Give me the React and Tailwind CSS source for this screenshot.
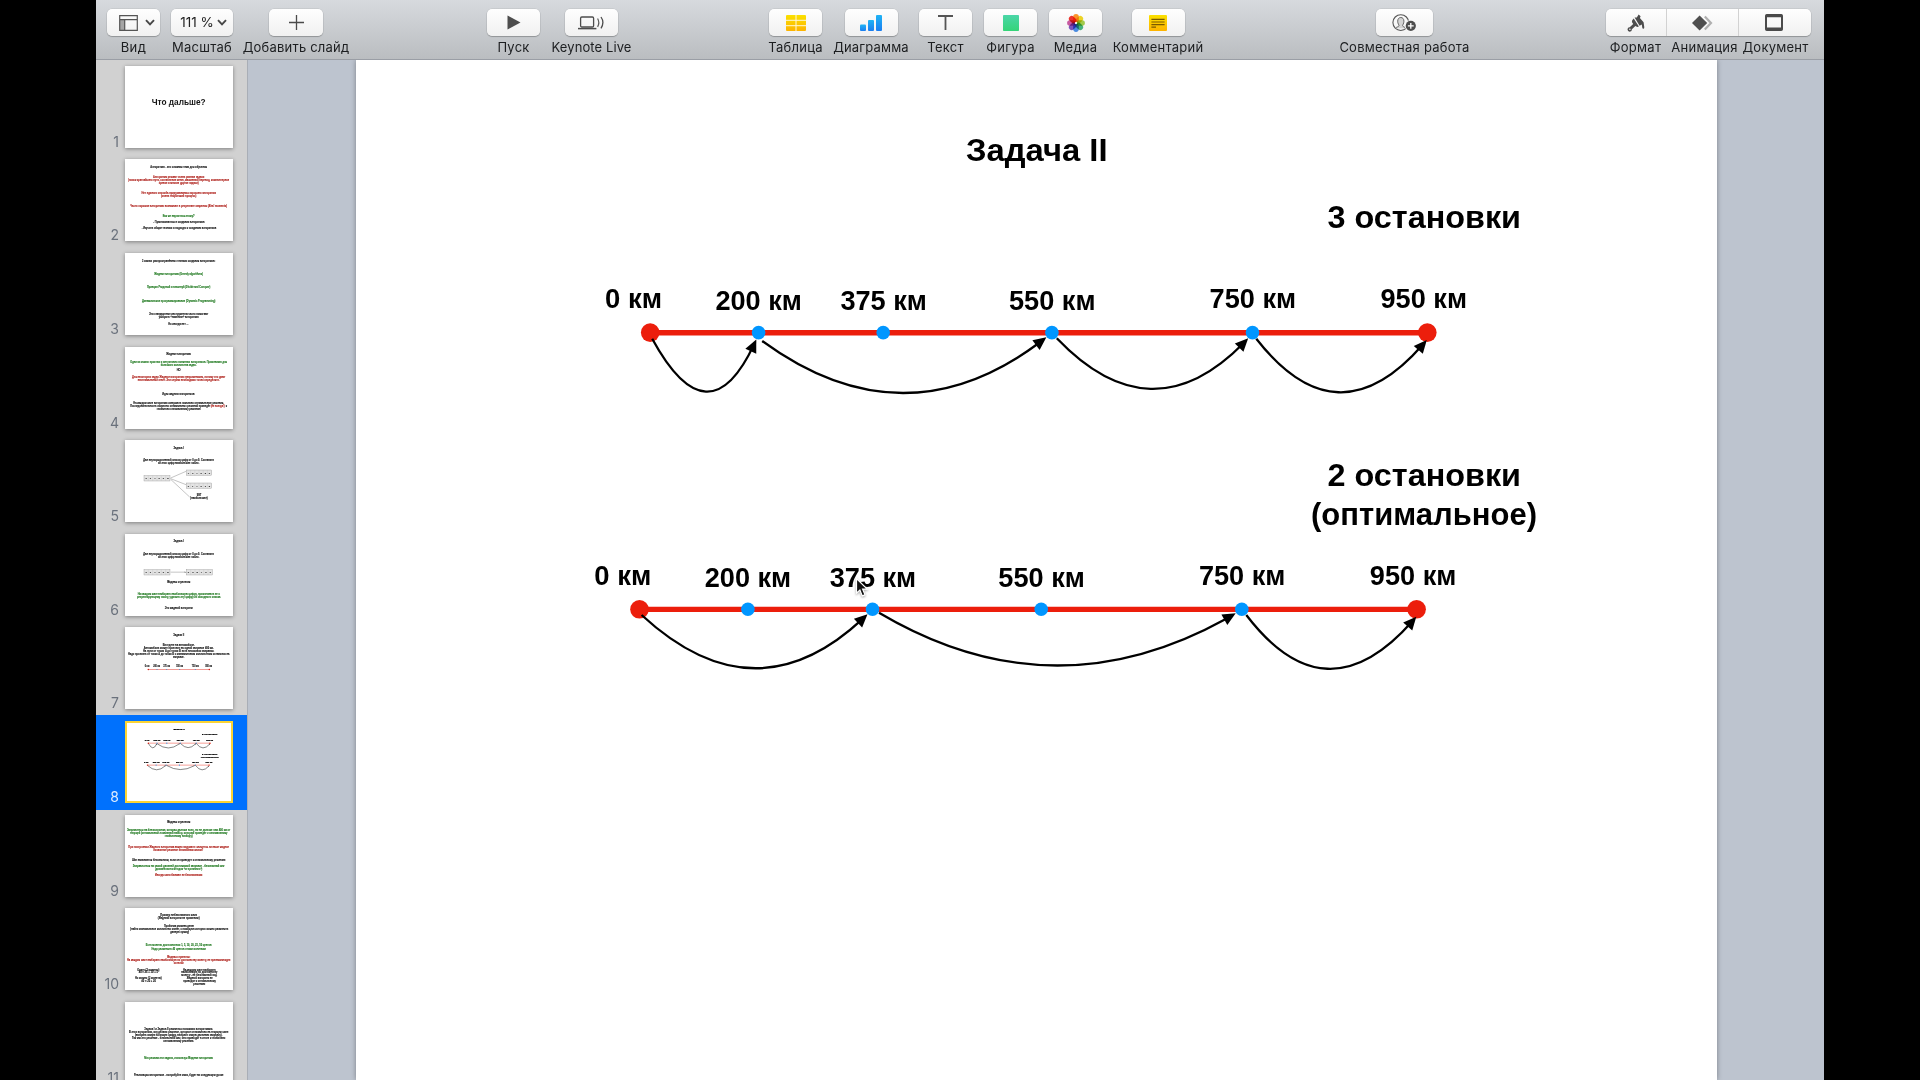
import React from "react";

const K = "#151515";
const R = "#b0241e";
const G = "#217a21";

/* ---------- Toolbar icons ---------- */

const Chevron = () => (
  <svg width="10" height="7" viewBox="0 0 10 7" fill="none" className="shrink-0">
    <path d="M1 1.2 5 5.4 9 1.2" stroke="#474747" strokeWidth="1.9" />
  </svg>
);

const ViewIcon = () => (
  <svg width="19" height="16" viewBox="0 0 19 16" fill="none" className="shrink-0">
    <rect x="0.7" y="4.7" width="5" height="10.6" fill="#a5a5a5" />
    <path d="M0.7 0.7h17.6v14.6H0.7zM0.7 4.7h17.6M5.7 4.7v10.6" stroke="#555" strokeWidth="1.2" />
  </svg>
);

const PlusIcon = () => (
  <svg width="15" height="15" viewBox="0 0 15 15">
    <path d="M7.5 0v15M0 7.5h15" stroke="#4a4a4a" strokeWidth="1.3" />
  </svg>
);

const PlayIcon = () => (
  <svg width="14" height="15" viewBox="0 0 14 15">
    <path d="M0.5 0.4 13.5 7.5 0.5 14.6z" fill="#4d4d4d" />
  </svg>
);

const LiveIcon = () => (
  <svg width="27" height="14" viewBox="0 0 27 14" fill="none">
    <rect x="2.6" y="1" width="13" height="10" rx="1.2" stroke="#4d4d4d" strokeWidth="1.3" />
    <path d="M0 12.6h18.4" stroke="#4d4d4d" strokeWidth="1.5" />
    <path d="M19.6 2.5q2.4 4 0 8.4" stroke="#5a5a5a" strokeWidth="1.2" />
    <path d="M23 1q3.8 5.4 0 11.4" stroke="#4d4d4d" strokeWidth="1.3" />
  </svg>
);

const TableIcon = () => (
  <svg width="20" height="16" viewBox="0 0 20 16">
    <defs>
      <linearGradient id="tableFill" x1="0" y1="0" x2="0" y2="1">
        <stop offset="0" stopColor="#fbe100" />
        <stop offset="1" stopColor="#fdb300" />
      </linearGradient>
    </defs>
    <rect width="20" height="16" rx="1" fill="url(#tableFill)" />
    <path d="M10 0v16M0 5.3h20M0 10.7h20" stroke="#fff8d8" strokeWidth="1" />
  </svg>
);

const ChartIcon = () => (
  <svg width="22" height="16" viewBox="0 0 22 16">
    <defs>
      <linearGradient id="barFill" x1="0" y1="0" x2="0" y2="1">
        <stop offset="0" stopColor="#1fb4f5" />
        <stop offset="1" stopColor="#1a7df0" />
      </linearGradient>
    </defs>
    <rect x="0" y="9.6" width="6" height="6.4" rx="1" fill="url(#barFill)" />
    <rect x="8" y="5" width="6" height="11" rx="1" fill="url(#barFill)" />
    <rect x="16" y="0" width="6" height="16" rx="1" fill="url(#barFill)" />
  </svg>
);

const TextIcon = () => (
  <svg width="15" height="15" viewBox="0 0 15 15">
    <path d="M0 1h15M7.5 1v14" stroke="#555" strokeWidth="1.8" />
  </svg>
);

const ShapeIcon = () => (
  <svg width="16" height="16" viewBox="0 0 16 16">
    <defs>
      <linearGradient id="shapeFill" x1="0" y1="0" x2="0" y2="1">
        <stop offset="0" stopColor="#4bd6a8" />
        <stop offset="1" stopColor="#35d478" />
      </linearGradient>
    </defs>
    <rect width="16" height="16" rx="0.8" fill="url(#shapeFill)" />
  </svg>
);

const PETALS = ["#ff8a12", "#f0d410", "#9ccb3a", "#35b075", "#3a86ea", "#7345bd", "#c94a9c", "#ee2018"];
const MediaIcon = () => (
  <svg width="18" height="18" viewBox="-9 -9 18 18">
    {PETALS.map((c, i) => (
      <rect
        key={c}
        x="-2.8"
        y="-8.9"
        width="5.6"
        height="8.2"
        rx="2.8"
        fill={c}
        fillOpacity="0.9"
        className="mix-blend-multiply"
        transform={`rotate(${i * 45})`}
      />
    ))}
    <circle r="1" fill="#fff" />
  </svg>
);

const CommentIcon = () => (
  <svg width="18" height="16" viewBox="0 0 18 16">
    <rect width="18" height="16" rx="1" fill="url(#tableFill)" />
    <path d="M2.4 4.4h13.2M2.4 7h13.2M2.4 9.6h13.2M2.4 12.1h4.6" stroke="#7a5a00" strokeWidth="1.1" />
  </svg>
);

const CollabIcon = () => (
  <svg width="25" height="18" viewBox="0 0 25 18" fill="none">
    <circle cx="8.8" cy="8.6" r="7.9" stroke="#555" strokeWidth="1.1" />
    <path
      d="M3.6 14.2c.6-1.2 3.4-1.4 3.4-2.6 0-.9-1.3-1.8-1.3-4.4 0-2.3 1.2-3.7 3.1-3.7s3.1 1.4 3.1 3.7c0 2.6-1.3 3.5-1.3 4.4 0 1.2 2 1.2 3 2.6"
      fill="#d4d4d4"
      stroke="#666"
      strokeWidth="1"
    />
    <circle cx="18.8" cy="11.8" r="5.9" fill="#f8f8f8" />
    <circle cx="18.8" cy="11.8" r="5.1" fill="#4d4d4d" />
    <path d="M18.8 8.9v5.8M15.9 11.8h5.8" stroke="#fff" strokeWidth="1.3" />
  </svg>
);

const FormatIcon = () => (
  <svg width="18" height="18" viewBox="0 0 18 18">
    <path d="M7.6 3.6 9.8 3.4 11.6.6 13.6 2.2 12.9 3.9 16.6 8.2 17.3 13.2Q17.2 14.8 16.2 14.7 15.1 14.5 15.2 13L14.8 10.6 12.6 11.7z" fill="#4d4d4d" />
    <path d="M6.7 4.5 11.9 12.4 10.3 13 8.4 11.9 4.9 15.3A2.2 2.2 0 1 1 2.7 13.3L6.2 10 4.9 8 5.2 6.2z" fill="#4d4d4d" />
    <circle cx="2.9" cy="15.3" r="0.8" fill="#f5f5f5" />
  </svg>
);

const AnimateIcon = () => (
  <svg width="21" height="16" viewBox="0 0 21 16">
    <path d="M12.8 1.6 19 8l-6.2 6.4" fill="none" stroke="#b0b0b0" strokeWidth="2.2" />
    <path d="M7.6.4 15.2 8l-7.6 7.6L0 8z" fill="#4f4f4f" />
  </svg>
);

const DocumentIcon = () => (
  <svg width="18" height="17" viewBox="0 0 18 17">
    <rect x="1" y="1" width="16" height="15" rx="0.8" fill="none" stroke="#4a4a4a" strokeWidth="2" />
    <path d="M1 2h16M1 14.8h16" stroke="#4a4a4a" strokeWidth="2.4" />
  </svg>
);

/* ---------- Toolbar ---------- */

const BTN =
  "flex h-[27px] items-center justify-center rounded-[5px] bg-gradient-to-b from-[#fefefe] to-[#f1f1f1] shadow-[0_1px_1px_rgba(0,0,0,0.22),0_0_0_0.5px_rgba(0,0,0,0.1)]";

function Tool({ label, className, track = "tracking-[0.25px]", children }) {
  return (
    <div className={`flex shrink-0 flex-col items-center ${className}`}>
      <button className={`${BTN} w-full`}>{children}</button>
      <span className={`mt-[3px] text-[13px] leading-4 whitespace-nowrap ${track}`}>{label}</span>
    </div>
  );
}

function Toolbar() {
  return (
    <header className="flex h-[60px] shrink-0 items-start border-b border-[#9a9ea5] bg-gradient-to-b from-[#d7dade] to-[#babdc0] pt-[9px] text-[#1c1e20]">
      <Tool label="Вид" className="ml-[11px] w-[53px]" track="tracking-[0.4px]">
        <span className="flex items-center gap-[7px] pl-[6px]"><ViewIcon /><Chevron /></span>
      </Tool>
      <Tool label="Масштаб" className="ml-[11px] w-[62px]">
        <span className="flex items-center gap-[3px] pl-[3px] text-[13.5px] whitespace-nowrap text-[#222]">111 %<Chevron /></span>
      </Tool>
      <Tool label="Добавить слайд" className="ml-[36px] w-[54px]" track="tracking-[0.2px]"><PlusIcon /></Tool>
      <Tool label="Пуск" className="ml-[164px] w-[53px]"><PlayIcon /></Tool>
      <Tool label="Keynote Live" className="ml-[25px] w-[53px]" track="tracking-[0.1px]"><LiveIcon /></Tool>
      <Tool label="Таблица" className="ml-[151px] w-[53px]"><TableIcon /></Tool>
      <Tool label="Диаграмма" className="ml-[22.500px] w-[53px]" track="tracking-[0.15px]"><ChartIcon /></Tool>
      <Tool label="Текст" className="ml-[21.500px] w-[53px]"><TextIcon /></Tool>
      <Tool label="Фигура" className="ml-[12px] w-[53px]"><ShapeIcon /></Tool>
      <Tool label="Медиа" className="ml-[12px] w-[53px]"><MediaIcon /></Tool>
      <Tool label="Комментарий" className="ml-[29.500px] w-[53px]"><CommentIcon /></Tool>
      <Tool label="Совместная работа" className="ml-[191.500px] w-[57px]"><CollabIcon /></Tool>
      <div className="ml-[173px] flex w-[205px] flex-col">
        <div className={`${BTN} w-full divide-x divide-[#d2d2d2]`}>
          <button className="flex h-full w-[61px] items-center justify-center"><FormatIcon /></button>
          <button className="flex h-full w-[72px] items-center justify-center"><AnimateIcon /></button>
          <button className="flex h-full w-[72px] items-center justify-center pr-[2px]"><DocumentIcon /></button>
        </div>
        <div className="mt-[3px] flex text-[13px] leading-4 tracking-[0.25px]">
          <span className="flex w-[59px] justify-center">Формат</span>
          <span className="flex w-[79px] justify-center">Анимация</span>
          <span className="flex w-[63px] justify-center">Документ</span>
        </div>
      </div>
    </header>
  );
}

/* ---------- Slide 8: the two routes ---------- */

const STOPS = [
  { x: 294.2, label: "0 км", from: 249, w: 57, y: 248, end: true },
  { x: 402.6, label: "200 км", from: 359.4, w: 86.5, y: 250.4 },
  { x: 527.2, label: "375 км", from: 484.4, w: 86.5, y: 250.4 },
  { x: 695.9, label: "550 км", from: 653, w: 86.5, y: 250.4 },
  { x: 896.5, label: "750 км", from: 853.6, w: 86.5, y: 248 },
  { x: 1071.3, label: "950 км", from: 1024.5, w: 86.5, y: 248, end: true },
];

const HOPS_A = [
  [296.2, 278.7, 351, 331.6, 400.3, 279.5],
  [406.2, 281, 549.5, 333, 690.4, 277.3],
  [700.8, 278.3, 797, 328.9, 892.2, 278.3],
  [900.3, 278.7, 984.4, 332.3, 1070.8, 280],
];
const HOPS_B = [
  [285.6, 555, 400, 608.3, 511.5, 554.3],
  [523, 552.7, 701, 605.5, 879.7, 553.3],
  [890.3, 555, 973.5, 608.8, 1060.3, 556.7],
];

// A hop is a quadratic curve through its lowest point, closed with an arrowhead.
function Hop({ pts, weight }) {
  const [x1, y1, mx, my, x2, y2] = pts;
  const cx = 2 * mx - (x1 + x2) / 2;
  const cy = 2 * my - (y1 + y2) / 2;
  const t = 0.96;
  const px = (1 - t) * (1 - t) * x1 + 2 * t * (1 - t) * cx + t * t * x2;
  const py = (1 - t) * (1 - t) * y1 + 2 * t * (1 - t) * cy + t * t * y2;
  const angle = (Math.atan2(y2 - py, x2 - px) * 180) / Math.PI;
  return (
    <g>
      <path
        d={`M${x1} ${y1}Q${cx} ${cy} ${x2} ${y2}`}
        fill="none"
        stroke="#000"
        strokeWidth={weight}
        strokeDasharray="0.97 1"
        pathLength="1"
      />
      <path d="M0 0-13 6V-6z" transform={`translate(${x2} ${y2}) rotate(${angle})`} />
    </g>
  );
}

function Route({ dx = 0, dy = 0 }) {
  return (
    <g transform={`translate(${dx} ${dy})`}>
      <path d="M294 272.7H1071" stroke="#ec1e0c" strokeWidth="5.4" />
      {STOPS.map((s) => (
        <g key={s.label}>
          <circle cx={s.x} cy="272.6" r={s.end ? 9.3 : 6.8} fill={s.end ? "#ec1e0c" : "#0096ff"} />
          <text x={s.from} y={s.y} textLength={s.w} lengthAdjust="spacingAndGlyphs" className="text-[26.8px] font-bold">
            {s.label}
          </text>
        </g>
      ))}
    </g>
  );
}

function RouteSlide({ small }) {
  const weight = small ? 6 : 2.3;
  return (
    <svg
      viewBox="0 0 1361 1020"
      className={`block h-full w-full font-['Liberation_Sans',Arial,sans-serif] text-[32px] font-bold ${
        small ? "[&_text]:stroke-black [&_text]:stroke-[2.5px]" : ""
      }`}
    >
      <text x="610" y="101" textLength="141.5" lengthAdjust="spacingAndGlyphs">Задача II</text>
      <text x="971.5" y="168" textLength="193.5" lengthAdjust="spacingAndGlyphs">3 остановки</text>
      <Route />
      {HOPS_A.map((h) => <Hop key={h[0]} pts={h} weight={weight} />)}
      <text x="971.5" y="426.3" textLength="193.5" lengthAdjust="spacingAndGlyphs">2 остановки</text>
      <text x="955" y="465.3" textLength="226" lengthAdjust="spacingAndGlyphs">(оптимальное)</text>
      <Route dx={-10.7} dy={276.7} />
      {HOPS_B.map((h) => <Hop key={h[0]} pts={h} weight={weight} />)}
    </svg>
  );
}

/* ---------- Thumbnails ---------- */

// line: [text, centre x, centre y, width, colour, font size]
function Lines({ lines }) {
  return lines.map(([t, x, y, w, c = K, size = 7.7]) => (
    <text
      key={`${t}${y}`}
      x={x - w / 2}
      y={y + size * 0.3}
      textLength={w}
      lengthAdjust="spacingAndGlyphs"
      fill={c}
      stroke={c}
      strokeWidth={size > 10 ? 0 : 0.3}
      fontSize={size}
      fontWeight="700"
    >
      {t}
    </text>
  ));
}

function Digits({ x, y, v, w = 78 }) {
  const step = w / v.length;
  return (
    <g>
      <rect x={x} y={y} width={w} height="16" fill="#e4e4e4" stroke="#858585" strokeWidth="1" />
      {[...v].map((d, i) => (
        <g key={i}>
          {i > 0 && <path d={`M${x + i * step} ${y}v16`} stroke="#aaa" strokeWidth="0.6" />}
          <text
            x={x + (i + 0.5) * step}
            y={y + 10.6}
            textAnchor="middle"
            fontSize="7.5"
            fontWeight="700"
            fill="#333"
            stroke="#333"
            strokeWidth="0.3"
          >
            {d}
          </text>
        </g>
      ))}
    </g>
  );
}

const THUMBS = [
  { lines: [["Что дальше?", 161, 109, 162, K, 25]] },
  {
    lines: [
      ["Алгоритмы - это сложная тема для обучения", 161, 24, 170],
      ["Алгоритмы решают очень разные задачи", 161, 54, 154, R],
      ["(поиск кратчайшего пути, составление меню, машинный перевод, компьютерное", 161, 63, 303, R],
      ["зрение и многие другие задачи)", 161, 72, 120, R],
      ["Нет единого способа придумывания хорошего алгоритма", 161, 103, 223, R],
      ["(очень творческий процесс)", 161, 112, 106, R],
      ["Часто хорошие алгоритмы возникают в результате озарения (Aha! moments)", 161, 142, 290, R],
      ["Как же научиться этому?", 161, 172, 96, G],
      ["- Практиковаться в создании алгоритмов", 162, 191, 154],
      ["- Изучить общие техники и подходы к созданию алгоритмов", 162, 209, 224],
    ],
  },
  {
    lines: [
      ["3 самых распространённых техники создания алгоритмов:", 161, 24, 220],
      ["Жадные алгоритмы (Greedy algorithms)", 161, 64, 146, G],
      ["Принцип Разделяй и властвуй (Divide and Conquer)", 161, 104, 190, G],
      ["Динамическое программирование (Dynamic Programming)", 161, 144, 220, G],
      ["Эти стандартные инструменты часто помогают", 161, 184, 178],
      ["ускорить «наивные» алгоритмы", 161, 193, 120],
      ["Но иногда нет ...", 160, 215, 61],
    ],
  },
  {
    lines: [
      ["Жадные алгоритмы", 161, 22, 74],
      ["Одни из самых простых и интуитивно понятных алгоритмов. Применимы для", 161, 46, 290, G],
      ["большого количества задач.", 161, 55, 108, G],
      ["НО", 161, 71, 12],
      ["Для некоторых задач Жадные алгоритмы неприменимы, потому что дают", 161, 90, 280, R],
      ["неоптимальный ответ. Эти случаи необходимо точно определять.", 161, 99, 246, R],
      ["Идея жадных алгоритмов:", 161, 143, 98],
      ["На каждом шаге алгоритма совершать локально оптимальные решения.", 161, 168, 272],
      ["Последовательность локально оптимальных решений приведёт", 136, 177, 240],
      ["(не всегда!)", 278, 177, 42, R],
      ["к", 304, 177, 4],
      ["глобально оптимальному решению", 161, 186, 132],
    ],
  },
  {
    lines: [
      ["Задача I", 161, 25, 31],
      ["Дан неупорядоченный список цифр от 0 до 9. Составить", 161, 62, 212],
      ["из этих цифр наибольшее число.", 161, 71, 124],
      ["997", 222, 167, 14],
      ["(наибольшее)", 222, 176, 52],
    ],
    art: (
      <g>
        <Digits x={57} y={107} v="937598" />
        <Digits x={184} y={90} v="137589" w={76} />
        <Digits x={184} y={129} v="917538" w={76} />
        <path d="M137 114 183 94M137 116 183 134M137 118 194 171" stroke="#777" strokeWidth="1.3" fill="none" />
      </g>
    ),
  },
  {
    lines: [
      ["Задача I", 161, 22, 31],
      ["Дан неупорядоченный список цифр от 0 до 9. Составить", 161, 61, 212],
      ["из этих цифр наибольшее число.", 161, 70, 124],
      ["Жадная стратегия", 161, 146, 70],
      ["На каждом шаге выбирать наибольшую цифру, приклеивать ее к", 161, 181, 246, G],
      ["результирующему числу, удалять эту цифру из исходного списка", 161, 190, 250, G],
      ["Это жадный алгоритм", 161, 223, 84],
    ],
    art: (
      <g>
        <Digits x={57} y={107} v="937598" />
        <Digits x={184} y={107} v="998753" />
        <path d="M137 114.5H180" stroke="#777" strokeWidth="1.3" />
        <path d="M184 114.5l-5-2v4z" fill="#555" />
      </g>
    ),
  },
  {
    lines: [
      ["Задача II", 161, 24, 33],
      ["Вы едете на автомобиле.", 161, 54, 96],
      ["Автомобиль может проехать на одной заправке 400 км.", 161, 63, 210],
      ["На пути от точки A до точки B есть несколько заправок.", 161, 72, 214],
      ["Надо проехать от точки A до точки B с минимальным количеством остановок на", 161, 81, 304],
      ["заправке.", 161, 90, 34],
      ["0 км", 66, 119, 14],
      ["200 км", 95, 119, 21],
      ["375 км", 125, 119, 21],
      ["550 км", 164, 119, 21],
      ["750 км", 211, 119, 21],
      ["950 км", 251, 119, 21],
    ],
    art: (
      <g>
        <path d="M70 127.5H253" stroke="#e8665e" strokeWidth="2" />
        <circle cx="70" cy="127.5" r="2.4" fill="#d8251c" />
        <circle cx="253" cy="127.5" r="2.4" fill="#d8251c" />
        {[96, 125, 164, 211].map((x) => <circle key={x} cx={x} cy="127.5" r="1.7" fill="#3f8fdc" />)}
      </g>
    ),
  },
  { route: true },
  {
    lines: [
      ["Жадная стратегия", 161, 21, 70],
      ["Заправиться на бензоколонке, которая дальше всех, но не дальше чем 400 км от", 161, 47, 310, G],
      ["текущей (оптимальный локальный выбор, который приведет к оптимальному", 161, 56, 292, G],
      ["глобальному выбору)", 161, 65, 84, G],
      ["При построении Жадного алгоритма важно задумать: является ли наше жадное", 161, 97, 302, R],
      ["локальное решение", 122, 106, 74, R],
      ["безопасным шагом?", 198, 106, 74, R],
      ["Шаг называется безопасным, если он приведет к оптимальному решению", 161, 136, 280],
      ["Заправляться на самой дальней достижимой заправке - безопасный шаг", 161, 154, 276, G],
      ["(доказательство методом «от противного»)", 161, 163, 142, G],
      ["Иногда шаги бывают не безопасными", 161, 181, 142, R],
    ],
  },
  {
    lines: [
      ["Пример небезопасного шага", 161, 23, 110],
      ["(Жадный алгоритм не применим)", 161, 32, 125],
      ["Проблема размена денег", 162, 54, 90],
      ["(найти минимальное количество монет, с помощью которых можно разменять", 163, 63, 294],
      ["данную сумму)", 164, 73, 57],
      ["Есть монеты достоинством 1, 5, 10, 20, 25, 50 центов", 161, 113, 197, G],
      ["Надо разменять 40 центов этими монетами", 161, 124, 163, G],
      ["Жадная стратегия:", 161, 149, 70, R],
      ["На каждом шаге выбирать наибольшую по достоинству монету, не превышающую", 161, 158, 310, R],
      ["остаток", 161, 167, 30, R],
      ["Ответ (3 монеты)", 70, 186, 66],
      ["40 = 25 + 10 + 5", 70, 194, 58],
      ["Но можно (2 монеты)", 70, 212, 80],
      ["40 = 20 + 20", 71, 221, 44],
      ["На каждом шаге выбирать", 223, 186, 98],
      ["наибольшую по достоинству", 223, 194, 108],
      ["монету - не безопасный ход.", 223, 203, 108],
      ["Жадный алгоритм не", 224, 212, 78],
      ["приводит к оптимальному", 224, 221, 98],
      ["решению", 223, 230, 36],
    ],
  },
  {
    lines: [
      ["Задача I и Задача II решаются похожими алгоритмами.", 161, 83, 206],
      ["В этих алгоритмах, мы делаем решение, которые оптимально на текущем шаге", 161, 92, 298],
      ["(выбрать самую большую цифру, выбрать самую дальнюю заправку).", 161, 101, 262],
      ["Так как это решение - безопасный шаг, оно приводит в итоге к глобально", 161, 110, 280],
      ["оптимальному решению.", 161, 119, 92],
      ["Мы решаем эти задачи, используя Жадные алгоритмы", 161, 169, 206, G],
      ["Реализация алгоритмов - попробуйте сами, будет на следующем уроке", 161, 219, 268],
    ],
  },
];

function Thumb({ n, slide }) {
  const active = slide.route;
  return (
    <li className={`flex h-[93.6px] shrink-0 items-end ${active ? "bg-[#0071fd] shadow-[0_1px_0_#0071fd]" : ""}`}>
      <span
        className={`w-[23px] pb-[5px] text-right text-[14px] leading-[14px] whitespace-nowrap ${
          active ? "text-[#dcecff]" : "text-[#6a717c]"
        }`}
      >
        {n}
      </span>
      <div
        className={`relative mb-[6px] ml-[6px] h-[82px] w-[108px] overflow-hidden bg-white ${
          active ? "" : "shadow-[0_1px_4px_rgba(0,0,0,0.4)]"
        }`}
      >
        {active ? (
          <>
            <RouteSlide small />
            <div className="absolute inset-0 border-2 border-[#fbd433]" />
          </>
        ) : (
          <svg viewBox="0 0 324 246" className="block h-full w-full font-['Liberation_Sans',Arial,sans-serif]">
            {slide.art}
            <Lines lines={slide.lines} />
          </svg>
        )}
      </div>
    </li>
  );
}

function Pointer() {
  return (
    <svg width="16" height="22" viewBox="0 0 16 22" className="absolute top-[517px] left-[499px] drop-shadow-[0_1px_1px_rgba(0,0,0,0.35)]">
      <path
        d="M1.5 1.5V16.2L4.9 13.1 7.3 18.9 10 17.8 7.6 12.1H12.2z"
        fill="#111"
        stroke="#fff"
        strokeWidth="1.2"
      />
    </svg>
  );
}

export default function App() {
  return (
    <div className="flex h-screen w-screen justify-center overflow-hidden bg-black font-['Inter',sans-serif]">
      <div className="flex h-[1080px] w-[1728px] flex-col overflow-hidden">
        <Toolbar />
        <main className="flex min-h-0 flex-1">
          <aside className="w-[152px] shrink-0 overflow-hidden border-r border-[#a9aeb6] bg-[#d1d1d1]">
            <ul className="flex flex-col pt-[0.3px]">
              {THUMBS.map((s, i) => <Thumb key={i} n={i + 1} slide={s} />)}
            </ul>
          </aside>
          <section className="flex flex-1 overflow-hidden bg-[#bdc4cf] pl-[108px]">
            <div className="relative h-[1020px] w-[1361px] shrink-0 bg-white shadow-[0_0_5px_rgba(0,0,0,0.35)]">
              <RouteSlide />
              <Pointer />
            </div>
          </section>
        </main>
      </div>
    </div>
  );
}
